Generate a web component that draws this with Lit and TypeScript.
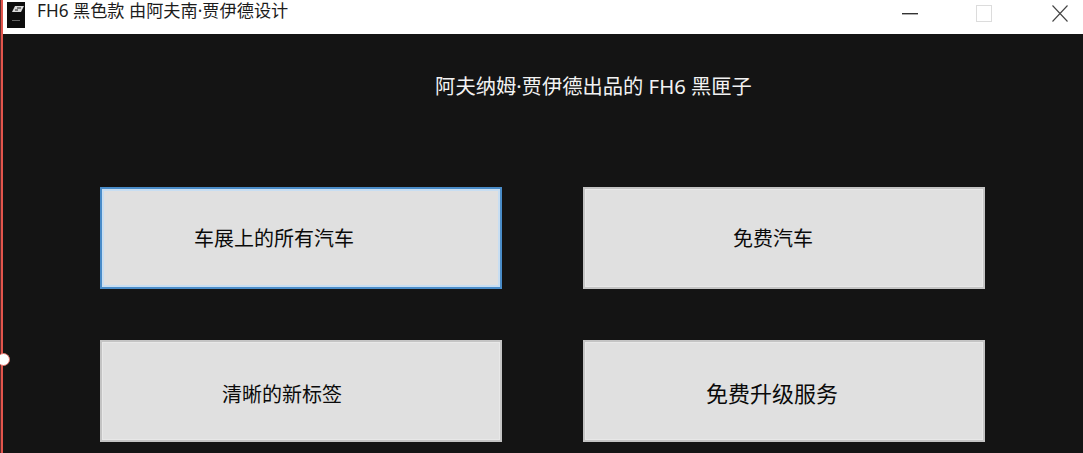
import { LitElement, html, css } from "lit";
import { customElement } from "lit/decorators.js";

@customElement("app-root")
export class AppRoot extends LitElement {
  static styles = css`
    :host {
      display: block;
      position: relative;
      width: 1083px;
      height: 453px;
      overflow: hidden;
      background: #141414;
      font-family: "Noto Sans", "Noto Sans CJK SC", sans-serif;
      color: #111;
    }
    .titlebar {
      height: 34px;
      background: #fff;
      display: flex;
      align-items: flex-start;
      padding-left: 7px;
      box-sizing: border-box;
    }
    .logo { width: 18px; height: 26px; margin: 2px 12px 0 0; flex: none; }
    .title { font-size: 17.2px; line-height: 22px; color: #1c1c1c; flex: 1; white-space: nowrap; }
    .controls { display: flex; align-items: center; height: 17px; margin-top: 5px; padding-right: 15px; gap: 58px; }
    .controls svg { display: block; }
    .controls svg:last-child { margin-left: 2px; }
    .heading {
      color: #f2f2f2;
      font-size: 20.3px;
      text-align: center;
      line-height: 28px;
      padding: 38px 0 0 104px;
      height: 115px;
      white-space: nowrap;
    }
    .grid {
      display: grid;
      grid-template-columns: 402px 402px;
      grid-auto-rows: 102px;
      column-gap: 81px;
      row-gap: 51px;
      padding-left: 100px;
    }
    .btn {
      appearance: none;
      box-sizing: border-box;
      background: #e0e0e0;
      border: 2px solid #c4c4c4;
      box-shadow: inset 0 0 0 1px #e8e8e8;
      font: inherit;
      font-size: 20px;
      color: #0a0a0a;
      display: flex;
      align-items: center;
      justify-content: center;
      padding: 0;
      white-space: nowrap;
    }
    .focus { border-color: #4a8cc8; box-shadow: inset 0 0 0 2px #c8def2; padding: 0 54px 2px 0; }
    .free { padding: 0 22px 2px 0; }
    .clear { padding: 4px 38px 0 0; }
    .upgrade { font-size: 22px; padding: 2px 24px 0 0; }
    .edge {
      position: absolute;
      left: 0;
      top: 0;
      bottom: 0;
      width: 3px;
      background: linear-gradient(90deg, #5a2a2a 0 1px, #e2554c 1px);
    }
    .dot {
      position: absolute;
      left: -3px;
      top: 353px;
      width: 13px;
      height: 13px;
      border-radius: 50%;
      background: #fff;
      border: 1px solid #e2756c;
      box-sizing: border-box;
    }
  `;

  render() {
    return html`
      <div class="titlebar">
        <svg class="logo" viewBox="0 0 18 26">
          <rect width="18" height="26" fill="#0d0d0d" />
          <path d="M5 10 L8 4 H17 L14 10 Z" fill="#d8d8d8" />
          <path d="M10 6 H14 M8 8 H11" stroke="#222" stroke-width="1" />
          <rect x="5" y="18" width="8" height="1" fill="#666" />
        </svg>
        <div class="title">FH6 黑色款 由阿夫南·贾伊德设计</div>
        <div class="controls">
          <svg width="16" height="2" viewBox="0 0 16 2"><rect width="16" height="1.4" fill="#333" /></svg>
          <svg width="16" height="17" viewBox="0 0 16 17"><rect x=".5" y=".5" width="15" height="16" fill="none" stroke="#dcdcdc" /></svg>
          <svg width="16" height="17" viewBox="0 0 16 17"><path d="M.5 .5 L15.5 16.5 M15.5 .5 L.5 16.5" stroke="#444" stroke-width="1.1" fill="none" /></svg>
        </div>
      </div>
      <div class="heading">阿夫纳姆·贾伊德出品的 FH6 黑匣子</div>
      <div class="grid">
        <button class="btn focus">车展上的所有汽车</button>
        <button class="btn free">免费汽车</button>
        <button class="btn clear">清晰的新标签</button>
        <button class="btn upgrade">免费升级服务</button>
      </div>
      <div class="edge"></div>
      <div class="dot"></div>
    `;
  }
}
